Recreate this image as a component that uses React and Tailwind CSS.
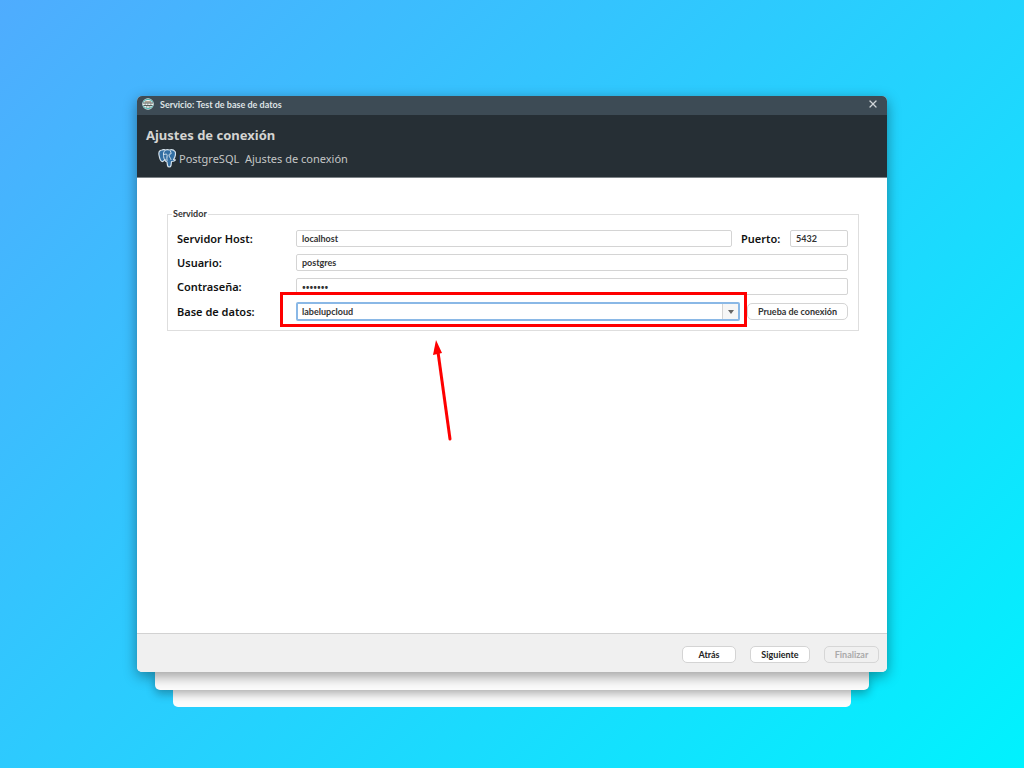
import { X } from "lucide-react";

const fieldClass =
  "block h-[17px] w-full min-w-0 rounded-[2px] border border-[#d4d4d4] bg-white px-[5px] text-[#333] outline-none";

const inputClass = `${fieldClass} font-['Lato','Noto_Sans',sans-serif] text-[9px] font-bold`;

const labelClass = "text-[11px] leading-[17px] font-semibold text-[#111]";

const buttonClass =
  "h-[17px] rounded-[5px] border font-['Lato','Noto_Sans',sans-serif] text-[9px] leading-none font-bold";

function AppLogo() {
  return (
    <svg viewBox="0 0 24 24" className="size-3 shrink-0" aria-hidden="true">
      <circle cx="12" cy="12" r="11.5" fill="#eef4f3" />
      <path d="M2 9a11 11 0 0 1 20 0" fill="none" stroke="#3ba9ab" strokeWidth="2" />
      <path d="M2 15a11 11 0 0 0 20 0" fill="none" stroke="#47b3b0" strokeWidth="2" />
      <path d="M6 6h12v3H6z" fill="#b5a594" />
      <path d="M2 9h20v2H2zM3 14h18v2H3z" fill="#565c5b" />
      <path d="M5 12h3M10 12h3M16 12h3" stroke="#7d8583" strokeWidth="2" />
      <path d="M8 18h3M13 18h4" stroke="#66706e" strokeWidth="2" />
    </svg>
  );
}

function PostgresLogo() {
  return (
    <svg viewBox="0 0 36 38" className="h-[19px] w-[18px] shrink-0" aria-hidden="true">
      <path
        d="M8 2C3 2 1 6 2 12c1 6 3 12 6 13 2 1 4-2 6-4 0 3 1 4 4 5l1 7c1 4 6 4 7 0l1-8c4 0 7-1 8-3-1-1-3 0-4-1 4-5 5-13 3-16-3-4-8-4-11-3-3-1-6-1-8 0-2-1-5-1-7 0z"
        fill="#336fa3"
        stroke="#d5e2ec"
        strokeWidth="2.4"
        strokeLinejoin="round"
      />
      <path
        d="M13 21c-2-4-2-7-2-11 0-3 1-5 3-7M12 11c3-1 5-1 6 0 1 3-1 6 0 12M25 4c1 2 1 4 1 6-2 0-4 0-4 2 0 4 3 5 4 9"
        fill="none"
        stroke="#d5e2ec"
        strokeWidth="2"
        strokeLinecap="round"
      />
    </svg>
  );
}

function Header() {
  return (
    <header>
      <div className="flex h-[19px] justify-between bg-[#3d4b55] pr-2 pb-[3px] pl-[5px]">
        <div className="flex items-center gap-[6px]">
          <AppLogo />
          <span className="font-['Lato','Noto_Sans',sans-serif] text-[9px] leading-none font-bold text-[#dfe3e5]">
            Servicio: Test de base de datos
          </span>
        </div>
        <button type="button" aria-label="Cerrar" className="text-[#cfd4d7]">
          <X size={12} strokeWidth={2.5} />
        </button>
      </div>
      <div className="border-b border-[#7d8387] bg-[#262f35] px-[9px] pt-[11px] pb-2">
        <h1 className="text-[13px] leading-[18px] font-bold text-[#d4d4d2]">Ajustes de conexión</h1>
        <div className="mt-1 flex items-center gap-[3px] pl-3">
          <PostgresLogo />
          <p className="text-[11px] leading-[21px] whitespace-pre text-[#c4c6c6]">
            PostgreSQL  Ajustes de conexión
          </p>
        </div>
      </div>
    </header>
  );
}

function DatabaseSelect() {
  return (
    <div className="relative min-w-0 flex-1">
      <select
        id="database"
        defaultValue="labelupcloud"
        className="block h-[19px] w-full appearance-none rounded-[2px] border-2 border-[#8ab8e6] bg-white px-1 font-['Lato','Noto_Sans',sans-serif] text-[9px] font-bold text-[#333] outline-none"
      >
        <option value="labelupcloud">labelupcloud</option>
      </select>
      <span className="pointer-events-none absolute inset-y-[2px] right-[2px] flex w-4 items-center justify-center border-l border-[#d4d4d4] bg-[#f6f6f6]">
        <svg viewBox="0 0 6 4" className="h-1 w-[6px]" aria-hidden="true">
          <path d="M0 0h6L3 4z" fill="#666" />
        </svg>
      </span>

      {/* callout around the field, with the arrow pointing up at it */}
      <div className="pointer-events-none absolute -top-[10px] -right-[7px] -bottom-[6px] -left-4 border-[3px] border-[#fe0000]" />
      <svg
        viewBox="0 0 20 102"
        className="pointer-events-none absolute top-[38px] left-[137px] h-[102px] w-5"
        aria-hidden="true"
      >
        <path d="M5 12L17 99" stroke="#fe0000" strokeWidth="3" strokeLinecap="round" />
        <path d="M3 0L9 13L0 15z" fill="#fe0000" />
      </svg>
    </div>
  );
}

function ServerForm() {
  return (
    <fieldset className="border border-[#dedede] px-1 pb-[9px]">
      <legend className="px-px font-['Lato','Noto_Sans',sans-serif] text-[9px] leading-3 font-bold text-[#333]">
        Servidor
      </legend>
      <div className="grid grid-cols-[119px_minmax(0,1fr)] items-center gap-y-[7px] pt-[10px] pr-[6px] pl-[5px]">
        <label htmlFor="host" className={labelClass}>Servidor Host:</label>
        <div className="flex items-center">
          <input id="host" type="text" defaultValue="localhost" className={inputClass} />
          <label htmlFor="port" className={`${labelClass} w-[58px] shrink-0 pl-[9px]`}>Puerto:</label>
          <div className="w-[58px] shrink-0">
            <input id="port" type="text" defaultValue="5432" className={inputClass} />
          </div>
        </div>

        <label htmlFor="user" className={labelClass}>Usuario:</label>
        <input id="user" type="text" defaultValue="postgres" className={inputClass} />

        <label htmlFor="password" className={labelClass}>Contraseña:</label>
        <input
          id="password"
          type="password"
          defaultValue="1234567"
          className={`${fieldClass} text-[10px] font-semibold`}
        />

        <label htmlFor="database" className={labelClass}>Base de datos:</label>
        <div className="flex items-center gap-[7px]">
          <DatabaseSelect />
          <button type="button" className={`${buttonClass} w-[101px] border-[#d4d4d4] bg-white text-[#333]`}>
            Prueba de conexión
          </button>
        </div>
      </div>
    </fieldset>
  );
}

export default function App() {
  return (
    <div className="min-h-screen bg-linear-135/srgb from-[#4facfe] to-[#00f2fe] px-4 pt-24 pb-[60px] font-['Noto_Sans','Open_Sans',sans-serif]">
      <div className="mx-auto w-full max-w-[750px]">
        <main className="relative z-20 overflow-hidden rounded-[5px] bg-white shadow-[0_4px_14px_rgba(0,0,0,0.4)]">
          <Header />
          <section className="min-h-[455px] pt-[30px] pr-7 pl-[30px]">
            <ServerForm />
          </section>
          <footer className="flex justify-end gap-[14px] border-t border-[#d2d2d2] bg-[#f0f0f0] pt-3 pr-2 pb-[9px]">
            <button type="button" className={`${buttonClass} w-[54px] border-[#d4d4d4] bg-white text-[#222]`}>
              Atrás
            </button>
            <button type="button" className={`${buttonClass} w-[60px] border-[#d4d4d4] bg-white text-[#222]`}>
              Siguiente
            </button>
            <button type="button" disabled className={`${buttonClass} w-[55px] border-[#d6d6d6] bg-[#f0f0f0] text-[#aaa]`}>
              Finalizar
            </button>
          </footer>
        </main>
        <div className="relative z-10 mx-[18px] h-[18px] rounded-b-[5px] bg-[#fcfcfc] shadow-[0_4px_10px_rgba(0,0,0,0.3)]" />
        <div className="mx-9 h-[17px] rounded-b-[5px] bg-[#fcfcfc]" />
      </div>
    </div>
  );
}
